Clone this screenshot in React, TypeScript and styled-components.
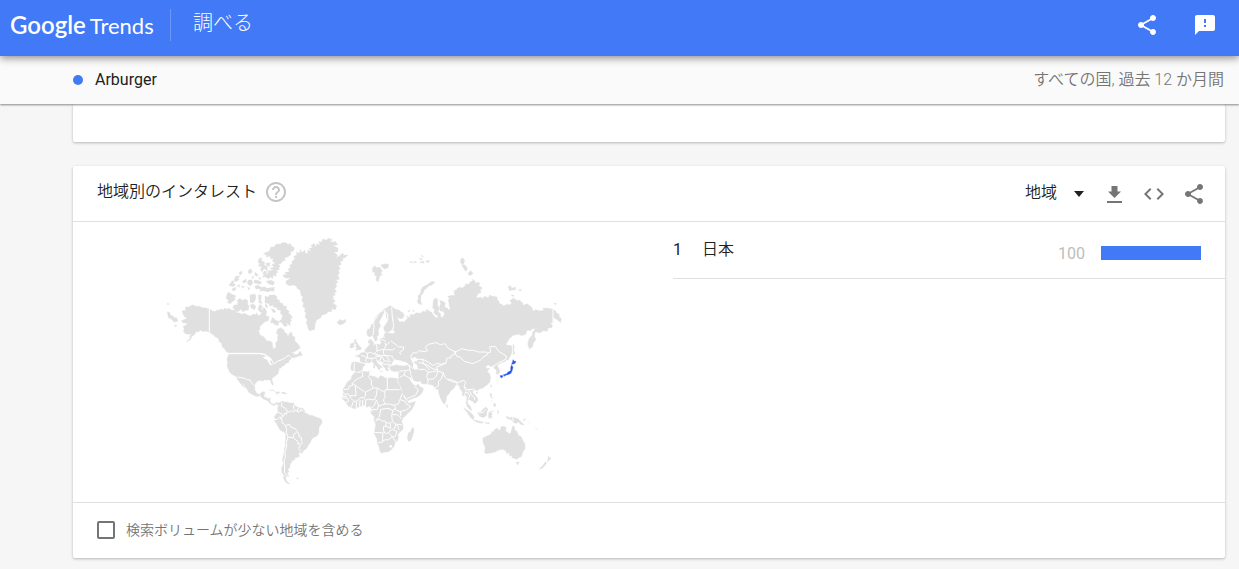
import React from 'react';
import styled, { createGlobalStyle } from 'styled-components';
import { MdCode, MdFeedback, MdHelpOutline, MdShare } from 'react-icons/md';

const GlobalStyle = createGlobalStyle`
  * { box-sizing: border-box; }
  body {
    margin: 0;
    background: #f6f6f6;
    color: #212121;
    font-family: Roboto, "Noto Sans CJK JP", sans-serif;
    font-size: 16px;
    line-height: 24px;
  }
`;

const Page = styled.div`
  display: flex;
  flex-direction: column;
`;

const Header = styled.header`
  display: flex;
  align-items: center;
  height: 56px;
  padding: 0 22px 6px 10px;
  background: #4279f7;
  color: #fff;
  position: relative;
  z-index: 2;
  box-shadow: 0 2px 8px rgba(0, 0, 0, 0.45);
`;

const Logo = styled.a`
  display: flex;
  align-items: baseline;
  gap: 4px;
  width: 160px;
  color: #fff;
  font-family: Lato, sans-serif;
  font-size: 22px;
  line-height: 32px;
  text-decoration: none;
`;

const Brand = styled.span`
  font-size: 24px;
  font-weight: 600;
`;

const PageName = styled.h1`
  flex: 1;
  margin: 0;
  padding: 0 0 4px 22px;
  border-left: 1px solid #6d98f9;
  font-size: 20px;
  font-weight: 300;
  line-height: 28px;
`;

const HeaderActions = styled.div`
  display: flex;
  gap: 34px;
`;

const IconButton = styled.button`
  display: flex;
  padding: 0;
  border: 0;
  background: none;
  color: inherit;
  font-size: 24px;
  cursor: pointer;
`;

const TermBar = styled.div`
  display: flex;
  align-items: center;
  justify-content: space-between;
  height: 48px;
  padding: 0 15px 0 73px;
  background: #fafafa;
  position: relative;
  z-index: 1;
  box-shadow: 0 1px 2px rgba(0, 0, 0, 0.45);
`;

const Term = styled.div`
  display: flex;
  align-items: center;
  gap: 12px;
`;

const Dot = styled.span`
  width: 10px;
  height: 10px;
  border-radius: 50%;
  background: #4279f7;
`;

const Scope = styled.span`
  color: #757575;
  font-weight: 350;
`;

const Content = styled.main`
  display: flex;
  flex-direction: column;
  gap: 24px;
  padding: 0 14px 10px 73px;
`;

const Card = styled.section`
  background: #fff;
  border-radius: 2px;
  box-shadow: 0 1px 3px rgba(0, 0, 0, 0.26);
`;

const CardEnd = styled(Card)`
  height: 38px;
`;

const CardHeader = styled.div`
  display: flex;
  align-items: center;
  justify-content: space-between;
  height: 56px;
  padding: 0 19px 0 24px;
  border-bottom: 1px solid #e0e0e0;
`;

const TitleGroup = styled.div`
  display: flex;
  align-items: center;
  gap: 7px;
  padding-bottom: 3px;
`;

const Title = styled.h2`
  margin: 0;
  font-size: 16px;
  font-weight: 350;
`;

const HelpButton = styled(IconButton)`
  color: #c4c4c4;
`;

const Tools = styled.div`
  display: flex;
  align-items: center;
  gap: 16px;
  color: #757575;
`;

const SelectWrap = styled.label`
  display: flex;
  align-items: center;
  margin-right: 2px;
  color: #212121;
`;

const Select = styled.select`
  width: 60px;
  margin-right: -11px;
  padding: 0 0 2px;
  border: 0;
  appearance: none;
  background: transparent;
  color: inherit;
  font: inherit;
  font-weight: 350;
  cursor: pointer;
`;

const CardBody = styled.div`
  display: grid;
  grid-template-columns: 1fr 1fr;
  min-height: 280px;
`;

const MapArea = styled.div`
  display: flex;
  align-items: center;
  justify-content: center;
`;

const Regions = styled.ol`
  margin: 0 0 0 24px;
  padding: 0;
  list-style: none;
`;

const RegionRow = styled.li`
  display: flex;
  align-items: center;
  height: 57px;
  padding-right: 24px;
  border-bottom: 1px solid #e0e0e0;
`;

const Rank = styled.span`
  width: 29px;
`;

const RegionName = styled.span`
  flex: 1;
  font-weight: 350;
`;

const Value = styled.span`
  padding-top: 7px;
  color: #bdbdbd;
`;

const Track = styled.span`
  width: 100px;
  margin: 6px 0 0 16px;
`;

const Bar = styled.span`
  display: block;
  height: 14px;
  background: #4279f7;
`;

const CardFooter = styled.div`
  display: flex;
  align-items: center;
  height: 56px;
  padding: 0 24px 2px;
  border-top: 1px solid #e0e0e0;
`;

const CheckLabel = styled.label`
  display: flex;
  align-items: center;
  gap: 11px;
  color: #757575;
  font-size: 14px;
  font-weight: 350;
`;

const Checkbox = styled.input`
  appearance: none;
  width: 18px;
  height: 18px;
  margin: 0;
  border: 2px solid #757575;
  border-radius: 2px;
  &:checked { background: #757575; }
`;

const toPath = (shape: string) => `M${shape.replace(/ /g, 'L')}Z`;
const toLine = (line: string) => `M${line.replace(/ /g, 'L')}`;

type Part = { x: number; y: number; land: string[]; borders?: string[] };

const northAmericaArctic: Part = {
  x: 0, y: 0,
  land: [
    '68,250 66,243 78,240 75,232 88,230 97,224 108,229 120,229 126,233 135,233 148,237 158,243 165,245 168,241 178,241 180,237 190,239 194,234 200,238 206,235 215,240 226,241 230,248 240,249 245,253 254,250 262,255 272,258 278,252 287,254 290,248 295,258 305,250 302,243 311,240 306,232 315,235 320,245 318,258 328,260 325,272 314,276 305,284 299,291 300,297 296,303 300,315 312,321 320,332 330,333 337,338 338,350 341,358 348,352 347,338 354,330 352,321 355,314 349,310 352,298 362,293 372,300 375,309 380,310 384,320 389,308 394,306 398,318 405,322 404,332 412,340 418,350 405,352 400,360 385,366 378,374 390,370 396,374 385,395 205,395 203,382 208,370 198,364 194,356 186,350 185,339 178,336 174,324 166,321 160,314 148,307 135,303 130,305 121,301 115,306 107,305 105,313 95,320 91,329 78,336 90,325 89,317 95,313 77,312 70,304 73,297 69,290 82,283 78,279 70,280 64,272 82,265 74,261',
    '202,190 207,187 214,192 228,198 223,204 226,209 216,215 211,221 203,218 205,210 198,205',
    '218,235 222,225 234,224 232,211 240,205 246,211 257,207 264,213 262,223 267,227 265,240 256,241 250,246 242,238 234,245 224,242 225,237',
    '315,198 324,202 329,195 345,195 351,200 350,208 358,210 359,218 368,220 371,229 380,228 378,237 388,244 385,252 391,253 398,265 391,264 395,273 390,276 391,288 380,278 382,288 373,289 364,277 355,275 364,269 368,257 361,250 363,242 351,238 350,232 340,232 340,225 330,229 325,220 315,219',
    '270,195 285,192 288,203 284,214 278,220 270,215', '295,194 304,196 302,213 308,220 297,219', '298,224 306,226 304,236 312,244 300,246 294,238',
    '315,222 322,226 323,234 317,231', '333,236 342,238 348,246 340,248',
    '270,225 280,222 288,230 283,239 274,235', '338,262 345,269 357,275 355,286 344,284 339,278 331,279 334,269',
    '310,72 321,65 327,65 332,52 343,50 348,43 361,42 367,38 379,38 384,44 390,40 395,48 403,53 401,62 392,66 393,73 385,80 373,83 376,91 367,94 363,101 355,102 361,108 356,113 358,119 348,121 354,126 347,132 350,139 340,136 338,145 330,141 326,147 316,140 308,142 311,134 323,132 326,122 340,120 329,115 343,111 335,105 346,98 337,94 340,84 332,87 330,78 318,81 320,75',
    '298,85 306,84 304,92 314,96 312,104 321,109 323,122 312,116 306,125 301,118 306,111 295,108 299,101 294,95',
    '317,100 330,98 328,110 320,106', '312,124 322,124 318,132 308,132',
    '284,169 294,166 304,172 316,171 320,175 343,172 342,184 330,182 325,186 310,182 299,184 302,176 288,177',
    '207,166 216,153 223,153 220,160 227,164 218,170', '222,150 228,138 241,139 234,144 237,150 226,155',
    '236,128 246,123 246,131 240,135', '264,122 273,116 277,127 267,132', '247,154 258,147 259,156 252,160',
    '264,151 276,149 278,161 270,168 262,160', '243,169 253,169 249,175', '218,175 228,172 227,180 217,183', '231,167 239,164 238,172', '262,172 270,174 266,180',
    '286,126 294,134 291,139 284,136', '276,138 282,142 278,146', '296,140 303,144 299,150', '282,151 293,151 305,157 300,163 283,159', '318,154 333,151 344,156 339,166 325,161',
    '368,135 380,133 374,127 389,125 384,118 392,112 388,105 397,103 395,95 405,86 401,79 411,75 409,66 418,70 422,58 425,68 435,60 437,73 445,66 441,60 454,64 447,55 458,53 453,47 462,40 467,50 471,41 480,45 476,34 485,37 488,27 500,30 505,24 517,29 510,36 527,35 533,44 518,47 534,54 534,65 522,66 533,76 528,84 541,76 547,69 553,76 563,74 556,83 548,85 549,93 540,93 544,103 535,108 542,116 535,120 539,131 533,133 538,148 528,149 534,158 526,162 531,168 524,177 530,185 522,189 527,194 518,198 522,205 515,205 526,213 519,220 530,227 526,239 515,236 516,244 503,246 499,252 485,256 482,264 470,270 466,280 463,300 456,299 451,304 444,296 442,284 438,279 442,270 435,260 438,250 433,243 436,235 428,230 431,218 425,213 428,200 423,196 420,180 412,176 409,168 400,165 387,167 379,162 378,153 392,145 374,143',
    '530,276 537,273 538,268 548,272 556,268 558,274 550,282 538,285',
    '22,245 30,248 31,255 40,258 41,264 49,262 54,274 42,276 35,268 25,263', '22,219 28,222 23,225', '43,284 51,287 45,290',
    '412,376 420,363 427,374 424,378', '512,206 521,208 517,215',
  ],
  borders: ['148,236 148,308', '208,370 295,370 318,375'],
};

const americas: Part = {
  x: 180, y: 330,
  land: [
    '28,39 130,39 220,20 236,14 241,24 224,35 210,38 222,39 220,44 239,42 237,48 220,54 214,50 213,58 205,62 207,67 196,71 192,78 186,78 184,85 177,83 178,91 174,93 176,99 166,108 158,113 155,119 159,128 160,137 155,132 151,121 144,119 139,121 132,119 129,124 120,121 112,124 106,130 104,138 105,151 111,161 120,163 126,155 135,156 132,168 138,169 140,173 151,174 150,186 158,192 165,191 169,187 177,190 174,195 166,192 163,197 156,194 148,189 143,182 130,177 124,171 114,169 108,169 98,164 85,156 83,149 75,141 73,135 66,130 64,122 59,118 59,113 66,125 66,131 74,143 66,137 60,128 55,123 48,109 39,105 30,98 25,88 21,78 23,66 21,57 25,49',
    '178,187 184,185 188,183 193,186 200,186 207,188 222,190 222,195 230,200 238,204 247,204 254,211 254,218 264,222 268,226 276,226 285,230 295,233 304,238 307,248 300,258 297,262 297,277 292,287 283,292 275,297 272,306 264,317 259,327 252,330 246,340 236,337 238,350 224,354 224,361 213,362 217,367 211,370 209,384 203,388 207,394 202,400 207,408 195,411 186,398 184,386 190,371 187,359 190,347 192,340 193,325 197,318 195,310 197,300 197,281 191,276 181,271 175,262 170,251 163,242 165,236 163,229 168,224 174,216 173,204',
    '188,411 197,412 199,422 210,432 198,428', '148,151 158,149 166,156 177,155 180,160 169,158 162,152', '183,158 190,156 201,161 192,162', '230,413 236,415 231,418', '167,160 174,162 169,163',
  ],
  borders: [
    '24,41 126,41 137,44 150,54 155,60 160,72 174,63 186,59 196,53 206,45 211,51', '52,111 75,115 82,119 91,120 94,128 104,137', '120,165 120,172', '132,168 139,172 148,175',
    '182,236 187,240 185,248 191,251 196,257 208,253 213,262 226,266 232,275 237,283 237,290 244,293 244,302 248,308 241,315 236,326 244,335',
    '184,238 187,229 192,227 194,219 200,223 201,212 209,217 215,212 220,216 224,211 237,216 244,210 250,213', '186,187 184,199 195,204 201,212', '174,217 186,222 187,229', '162,238 172,239 180,230 184,238',
    '196,257 200,268 199,278 204,291 199,307 200,321 195,335 196,352 192,363 194,381 193,397 202,408', '204,291 219,293 222,282 230,278', '219,293 234,305 233,312 241,311', '222,195 220,206 224,211', '235,204 232,214', '243,206 243,213',
  ],
};

const northEurasia: Part = {
  x: 540, y: 0,
  land: [
    '157,232 167,238 178,241 184,246 190,250 193,257 187,266 176,265 168,259 175,270 180,277 187,273 190,278 196,272 203,264 199,257 210,263 211,253 221,254 228,248 242,250 247,244 258,245 260,237 267,243 275,247 278,252 288,264 296,260 281,248 284,240 278,233 280,210 287,204 293,208 293,226 298,235 294,246 301,250 303,260 306,264 314,251 309,244 300,243 299,229 302,220 299,211 308,214 316,218 314,231 323,235 325,240 331,235 327,226 327,215 323,212 328,206 323,199 335,196 344,197 342,182 351,179 352,174 363,172 366,175 377,166 375,163 388,162 391,155 399,153 396,147 406,154 405,160 416,156 420,163 415,166 427,174 421,180 423,188 414,191 408,203 422,202 429,206 433,199 445,203 449,195 455,198 471,201 472,210 477,214 478,221 485,222 490,227 503,223 508,225 516,219 509,213 520,204 534,213 538,209 548,219 550,226 561,221 575,231 579,243 587,239 601,243 612,240 608,234 625,235 638,238 648,244 650,250 658,253 657,261 664,265 662,278 650,268 639,262 640,278 630,279 638,286 635,293 624,294 622,304 610,302 600,309 586,305 583,318 588,329 580,339 577,351 568,357 563,342 567,326 577,315 578,306 592,292 583,299 579,294 572,302 562,300 557,313 545,317 536,313 520,316 508,326 498,342 500,346 512,347 516,358 511,375 505,390 170,390 150,350 140,345 149,330 141,325 144,316 153,317 166,305 158,301 159,288 161,270 157,251 153,239',
    '135,235 144,240 156,235 158,263 161,288 155,300 142,308 133,303 131,292 144,273 139,263 138,250',
    '80,308 83,298 90,296 94,284 101,278 105,265 111,256 117,249 124,246 126,240 137,236 149,227 158,231 153,238 146,236 142,244 134,243 131,250 123,266 117,276 122,288 115,299 116,316 111,317 112,330 105,334 98,315 90,321 83,317',
    '97,115 104,107 110,113 120,112 127,124 122,129 127,134 119,139 115,155 108,151 110,138 103,136 105,126 98,127', '122,105 136,101 146,103 144,113 134,117 127,112',
    '208,96 217,94 218,98', '220,99 226,93 231,97', '237,85 247,86 243,91', '238,97 250,93 252,100', '255,94 268,91 266,98', '243,75 250,79 247,82',
    '362,88 368,83 374,90 372,99 368,104 361,98', '365,105 374,104 382,113 380,123 374,121', '386,127 393,122 399,130 393,136 384,135',
    '281,154 284,157 276,165 266,168 260,175 253,180 249,191 243,196 242,212 246,224 236,221 231,213 235,208 234,198 241,190 243,181 248,171 264,163 272,156',
    '504,170 512,167 515,175 526,171 527,179 516,180 509,182', '513,195 521,195 521,200', '535,179 546,179 540,183', '641,220 649,220 648,225', '203,243 210,240 208,246', '218,239 223,243 219,246',
  ],
  borders: ['99,315 102,291 101,275 113,257 117,248 128,242 137,240', '155,232 157,260 161,288 158,302', '134,243 143,252 143,270', '639,238 639,280'],
};

const southernHemisphere: Part = {
  x: 510, y: 300,
  land: [
    '118,45 121,38 127,32 132,40 130,46 142,42 149,44 154,38 150,28 160,22 165,8 545,48 545,70 540,80 531,87 526,94 515,99 508,102 502,106 507,116 510,126 504,133 498,131 500,121 491,114 493,107 482,110 475,104 467,110 471,116 480,115 472,124 479,132 482,143 479,157 470,166 459,174 447,177 442,183 434,178 428,184 431,191 439,199 444,207 443,214 432,221 430,215 420,210 414,207 412,219 421,228 426,243 417,237 411,229 408,218 410,210 406,196 397,198 397,186 390,177 388,168 377,165 371,176 361,183 358,191 350,199 348,213 344,223 338,218 330,201 325,185 326,178 318,178 309,166 296,163 275,161 271,154 261,155 250,151 241,142 238,143 244,155 251,165 259,167 264,161 270,170 280,175 279,183 273,193 263,200 243,208 233,213 227,202 217,188 216,177 203,153 206,147 206,132 211,123 203,122 195,125 185,122 179,116 181,108 189,107 199,104 211,107 225,108 237,103 229,97 219,94 212,93 218,87 207,91 202,87 194,88 187,97 183,105 172,106 178,111 172,113 177,121 169,123 165,115 158,107 156,99 145,92 139,85 139,93 144,101 156,110 157,114 150,112 150,118 146,120 142,112 132,102 127,94 119,98 107,98 104,106 99,110 98,118 90,124 79,125 74,122 65,122 62,114 65,98 72,95 91,98 90,83 76,77 87,75 92,69 102,67 106,58 112,52',
    '79,27 77,34 82,39 88,49 95,54 91,59 75,61 82,54 76,51 80,45 73,38 74,29', '62,41 72,38 72,49 68,54 59,54', '116,30 123,28 126,34 121,41 115,39', '130,105 134,106 134,115 130,113', '130,97 133,97 132,103',
    '75,127 88,129 95,124 113,125 121,122 119,136 128,139 139,141 145,147 150,137 158,139 167,145 182,143 197,145 203,146 201,155 208,165 213,179 219,189 220,200 233,216 237,220 256,214 254,223 246,238 232,252 219,265 215,274 219,284 219,298 211,305 204,313 205,323 202,333 195,338 193,348 185,358 176,365 161,367 155,370 150,365 148,352 142,340 141,327 132,310 136,292 137,282 132,271 133,261 122,249 125,238 120,228 110,232 104,226 87,230 76,236 65,234 55,228 45,214 37,206 39,198 41,187 39,177 46,167 52,156 63,148 65,138',
    '235,334 232,324 235,309 242,304 248,291 252,299 251,308 247,320 242,333',
    '458,325 466,320 473,317 483,313 486,304 491,306 493,299 502,294 505,300 512,299 512,290 523,289 529,294 526,302 539,311 543,307 547,289 552,288 555,301 560,303 565,315 575,322 579,333 585,341 585,356 578,367 575,379 565,384 561,388 548,384 544,377 538,377 538,367 531,372 528,363 518,358 504,361 494,367 477,370 468,371 463,367 466,354 460,340',
    '558,397 568,396 563,405', '655,378 658,383 664,384 659,390 651,395 654,388', '646,395 650,400 643,408 637,415 627,417 638,407',
    '528,258 538,263 549,261 566,268 573,275 583,285 571,283 565,275 560,280 550,278 544,269 532,266', '578,270 588,266 581,273', '595,275 602,280',
    '443,248 452,246 460,237 467,231 474,237 470,247 469,257 460,263 449,259', '400,233 407,237 421,247 432,259 431,269 422,263 411,247', '430,270 443,272 459,276 457,280 441,277', '477,246 492,242 481,248 488,251 484,257 488,264 481,260 478,267 475,258', '463,278 479,278 476,282', '503,240 507,247 503,252',
    '480,190 486,192 484,201 490,206 482,202', '491,221 497,220 497,230 490,227', '483,211 486,215', '349,223 355,228 351,233', '482,164 486,166 483,173', '438,187 444,187 441,192', '549,42 553,50 551,60 555,70 550,74 549,57', '616,293 624,300', '480,262 486,268', '150,124 158,123 155,126', '202,125 208,124 204,128',
  ],
  borders: [
    '96,126 99,139 88,144 75,151 67,160', '42,178 56,178 57,168 67,167 67,160 100,183 106,187 130,174', '118,122 120,132 115,140 124,150 125,165 130,174 142,174 164,187 165,180 172,180 172,144', '172,179 209,179',
    '76,166 78,197 59,197 54,192 42,192', '106,187 107,198 101,203 91,203 84,211 75,215 69,211 63,205 59,197', '101,203 107,211 114,207 132,210 139,196 142,174', '164,187 165,202 160,210 165,222 146,228 142,215 137,208', '165,222 179,222 192,226 205,222 212,203 217,190', '107,211 106,232', '124,235 132,227 138,213', '64,233 69,216', '78,235 80,215', '89,230 90,210', '98,228 98,210', '48,217 56,213 54,205 38,203', '38,198 51,199',
    '146,228 141,239 128,238 126,245', '137,272 148,261 152,238 174,235 190,242 185,253 187,274 181,280 168,278 165,273 155,273 151,268 136,271', '190,242 196,232 193,225', '196,232 195,238 210,245 222,241 230,239 243,229 230,223 225,214 211,209', '187,254 202,254 215,266', '187,275 197,282 217,285', '212,244 212,258',
    '132,307 164,309 160,300 161,289 168,289 168,279', '164,309 174,310 184,299 195,294 197,282', '158,310 158,336 145,338', '158,333 166,329 174,330 187,320 177,310', '187,320 196,319 201,304 190,300', '187,320 198,337', '168,288 181,295 181,281', '202,285 207,300',
    '183,33 199,45 206,51 221,51 220,60 209,67 213,74', '245,89 242,78 250,67 259,70 267,62 283,65 293,62 286,52 295,43 318,38 331,44 344,41 356,56 375,65 373,73 363,77 363,83 350,85 348,99 333,103 319,100 310,107 294,96 279,88 264,88', '375,65 385,62 395,56 415,61 431,61 445,66 470,66 473,73 459,82 451,91 429,101 402,94 393,83 378,77 376,65', '473,69 482,66 479,50 496,50 507,65 528,77 529,86 516,94 512,102', '513,93 496,105 488,109',
    '348,99 331,107 320,110 324,124 340,128 344,141 353,149 369,156 386,157 402,151 407,158 402,169 413,179 432,177', '340,128 335,144 325,155 326,167 315,174', '265,118 284,118 295,126 290,139 295,154 292,164', '294,127 308,125 324,123', '324,125 319,138 311,147 291,148', '265,98 281,100 299,120', '279,88 279,101 292,105 309,117 322,119',
    '231,103 242,109 248,116', '237,104 240,120 242,133 248,148', '209,123 226,122 238,120', '227,124 221,135 209,143', '222,135 239,144 247,157', '230,207 240,202 257,196 265,179 253,169', '353,147 369,151 380,156', '382,158 380,165 388,169', '402,169 409,185 404,193 411,205', '413,179 421,185 424,195 434,203 433,211', '407,188 414,188 420,198 415,206', '447,249 459,247 467,240', '549,261 549,276',
    '140,43 141,63 133,72 121,67 112,70 112,84 125,85 140,84', '165,38 168,48 161,58 141,62', '168,47 180,35', '161,59 160,72 169,78 178,90', '169,76 187,79 191,89', '112,70 104,65', '112,83 106,90 110,98', '133,72 153,77 169,77', '125,83 125,92', '140,78 157,82 163,93 183,94', '154,80 150,92 160,103 181,102', '73,98 72,122', '88,97 107,101', '94,76 106,80 112,84', '136,80 146,77', '160,95 157,101', '152,27 168,34', '149,20 165,22', '161,59 187,60 195,55',
  ],
};

const JAPAN = ['549,89 553,94 558,94 556,99 551,102 544,103 547,98', '545,105 549,112 547,121 543,130 534,134 526,136 519,135 530,131 534,126 542,122 542,112', '510,137 517,136 519,140 513,144', '521,136 527,136 523,139'];

const parts = [northAmericaArctic, americas, northEurasia, southernHemisphere];

const WorldMap = () => (
  <svg width="410" height="272" viewBox="-12 -12 1230 816" role="img" aria-label="世界地図">
    {parts.map((part, i) => (
      <g key={i} transform={`translate(${part.x} ${part.y})`}>
        <path fill="#e0e0e0" stroke="#e0e0e0" strokeWidth="1" d={part.land.map(toPath).join('')} />
      </g>
    ))}
    <g fill="#fff">
      <path d={toPath('308,382 320,378 335,386 330,395 338,408 328,402 322,390 314,386')} />
      <path d={toPath('753,388 764,381 774,388 769,395 764,392 762,398 771,404 774,417 762,419 758,409 760,403')} />
      <circle cx="692" cy="649" r="4" />
    </g>
    {parts.map((part, i) => (
      <g key={i} transform={`translate(${part.x} ${part.y})`}>
        <path fill="none" stroke="#fff" strokeWidth="3" strokeLinejoin="round" d={(part.borders ?? []).map(toLine).join('')} />
      </g>
    ))}
    <path transform="translate(510 300)" fill="#2450ef" stroke="#3c66f4" strokeWidth="1" d={JAPAN.map(toPath).join('')} />
  </svg>
);

const DownloadIcon = () => (
  <svg width="24" height="24" viewBox="0 0 24 24" fill="currentColor" aria-hidden="true">
    <path d="M9.5 4h6v5.5h3.5L12.5 16 6 9.5h3.5zM5 19h15v2H5z" />
  </svg>
);

const Caret = () => (
  <svg width="10" height="6" viewBox="0 0 10 6" fill="currentColor" aria-hidden="true">
    <path d="M0 0h10L5 6z" />
  </svg>
);

const regions = [{ name: '日本', value: 100 }];

export default function App() {
  return (
    <Page>
      <GlobalStyle />
      <Header>
        <Logo href="#"><Brand>Google</Brand><span>Trends</span></Logo>
        <PageName>調べる</PageName>
        <HeaderActions>
          <IconButton aria-label="共有"><MdShare /></IconButton>
          <IconButton aria-label="フィードバック"><MdFeedback /></IconButton>
        </HeaderActions>
      </Header>
      <TermBar>
        <Term><Dot />Arburger</Term>
        <Scope>すべての国, 過去 12 か月間</Scope>
      </TermBar>
      <Content>
        <CardEnd />
        <Card>
          <CardHeader>
            <TitleGroup>
              <Title>地域別のインタレスト</Title>
              <HelpButton aria-label="ヘルプ"><MdHelpOutline /></HelpButton>
            </TitleGroup>
            <Tools>
              <SelectWrap>
                <Select aria-label="表示単位" defaultValue="region">
                  <option value="region">地域</option>
                </Select>
                <Caret />
              </SelectWrap>
              <IconButton aria-label="ダウンロード"><DownloadIcon /></IconButton>
              <IconButton aria-label="埋め込み"><MdCode /></IconButton>
              <IconButton aria-label="共有"><MdShare /></IconButton>
            </Tools>
          </CardHeader>
          <CardBody>
            <MapArea><WorldMap /></MapArea>
            <Regions>
              {regions.map((region, i) => (
                <RegionRow key={region.name}>
                  <Rank>{i + 1}</Rank>
                  <RegionName>{region.name}</RegionName>
                  <Value>{region.value}</Value>
                  <Track><Bar style={{ width: `${region.value}%` }} /></Track>
                </RegionRow>
              ))}
            </Regions>
          </CardBody>
          <CardFooter>
            <CheckLabel>
              <Checkbox type="checkbox" />
              検索ボリュームが少ない地域を含める
            </CheckLabel>
          </CardFooter>
        </Card>
      </Content>
    </Page>
  );
}
